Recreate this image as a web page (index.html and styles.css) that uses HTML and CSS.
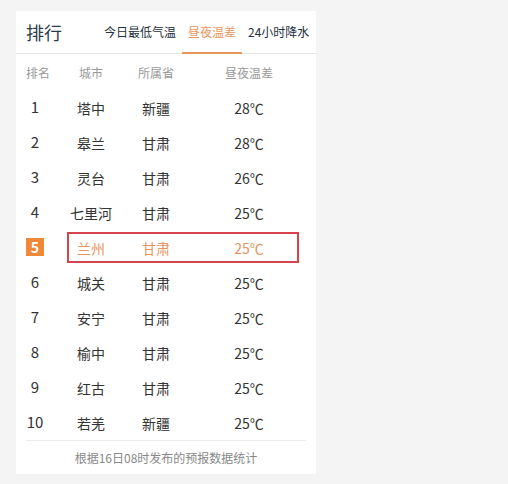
FILE: index.html
```html
<!DOCTYPE html>
<html lang="zh-CN">
<head>
<meta charset="utf-8">
<title>排行</title>
<link rel="stylesheet" href="styles.css">
</head>
<body>
<div class="card">
  <div class="head">
    <div class="title">排行</div>
    <div class="tabs">
      <span class="tab">今日最低气温</span>
      <span class="tab active">昼夜温差</span>
      <span class="tab">24小时降水</span>
    </div>
  </div>
  <div class="list">
    <div class="row th"><span class="rk">排名</span><span class="c">城市</span><span class="c">所属省</span><span class="c">昼夜温差</span></div>
    <div class="row"><span class="rk n">1</span><span class="c">塔中</span><span class="c">新疆</span><span class="c">28℃</span></div>
    <div class="row"><span class="rk n">2</span><span class="c">皋兰</span><span class="c">甘肃</span><span class="c">28℃</span></div>
    <div class="row"><span class="rk n">3</span><span class="c">灵台</span><span class="c">甘肃</span><span class="c">26℃</span></div>
    <div class="row"><span class="rk n">4</span><span class="c">七里河</span><span class="c">甘肃</span><span class="c">25℃</span></div>
    <div class="row hl"><span class="rk n"><b class="badge">5</b></span><span class="c">兰州</span><span class="c">甘肃</span><span class="c">25℃</span></div>
    <div class="row"><span class="rk n">6</span><span class="c">城关</span><span class="c">甘肃</span><span class="c">25℃</span></div>
    <div class="row"><span class="rk n">7</span><span class="c">安宁</span><span class="c">甘肃</span><span class="c">25℃</span></div>
    <div class="row"><span class="rk n">8</span><span class="c">榆中</span><span class="c">甘肃</span><span class="c">25℃</span></div>
    <div class="row"><span class="rk n">9</span><span class="c">红古</span><span class="c">甘肃</span><span class="c">25℃</span></div>
    <div class="row"><span class="rk n">10</span><span class="c">若羌</span><span class="c">新疆</span><span class="c">25℃</span></div>
  </div>
  <div class="foot">根据16日08时发布的预报数据统计</div>
</div>
</body>
</html>
```
FILE: styles.css
```css
html, body {
  margin: 0;
  padding: 0;
  background: #f4f4f4;
}
body {
  padding: 11px 0 0 16px;
  font-family: "Noto Sans CJK SC", "Microsoft YaHei", sans-serif;
  color: #333;
}
.card {
  width: 300px;
  background: #fff;
}
.head {
  display: flex;
  align-items: center;
  height: 42px;
  border-bottom: 1px solid #e6e6e6;
}
.title {
  padding-left: 10px;
  font-size: 18px;
  color: #2b3b4c;
  width: 72px;
  line-height: 42px;
}
.tabs {
  display: flex;
  align-self: stretch;
}
.tab {
  padding: 0 6px;
  font-size: 12px;
  color: #22303d;
  line-height: 42px;
  height: 41px;
  margin-bottom: -1px;
  border-bottom: 2px solid transparent;
}
.tab.active {
  color: #e8965e;
  border-bottom-color: #e8965e;
}
.list {
  padding: 0 4px 0 10px;
}
.row {
  position: relative;
  display: grid;
  grid-template-columns: 18px 82px 60px 126px;
  height: 35px;
  align-items: center;
  font-size: 14px;
}
.row.th {
  height: 36px;
  font-size: 12px;
  color: #999;
}
.row .c {
  text-align: center;
}
.row.th .rk {
  white-space: nowrap;
}
.row .n {
  text-align: center;
  font-size: 15px;
  position: relative;
  top: -1px;
}
.row > .c:nth-child(2) {
  margin-left: 12px;
}
.row.hl {
  color: #e8935d;
}
.row.hl::after {
  content: "";
  position: absolute;
  left: 41px;
  right: 13px;
  top: 2px;
  bottom: 2px;
  border: 2px solid #d7434c;
}
.badge {
  display: inline-block;
  width: 18px;
  height: 18px;
  line-height: 18px;
  background: #f0883a;
  color: #fff;
  font-weight: bold;
  font-size: 14px;
  text-align: center;
}
.foot {
  margin: 0 10px;
  border-top: 1px solid #ececec;
  height: 33px;
  line-height: 34px;
  text-align: center;
  font-size: 12px;
  color: #888;
}
```
